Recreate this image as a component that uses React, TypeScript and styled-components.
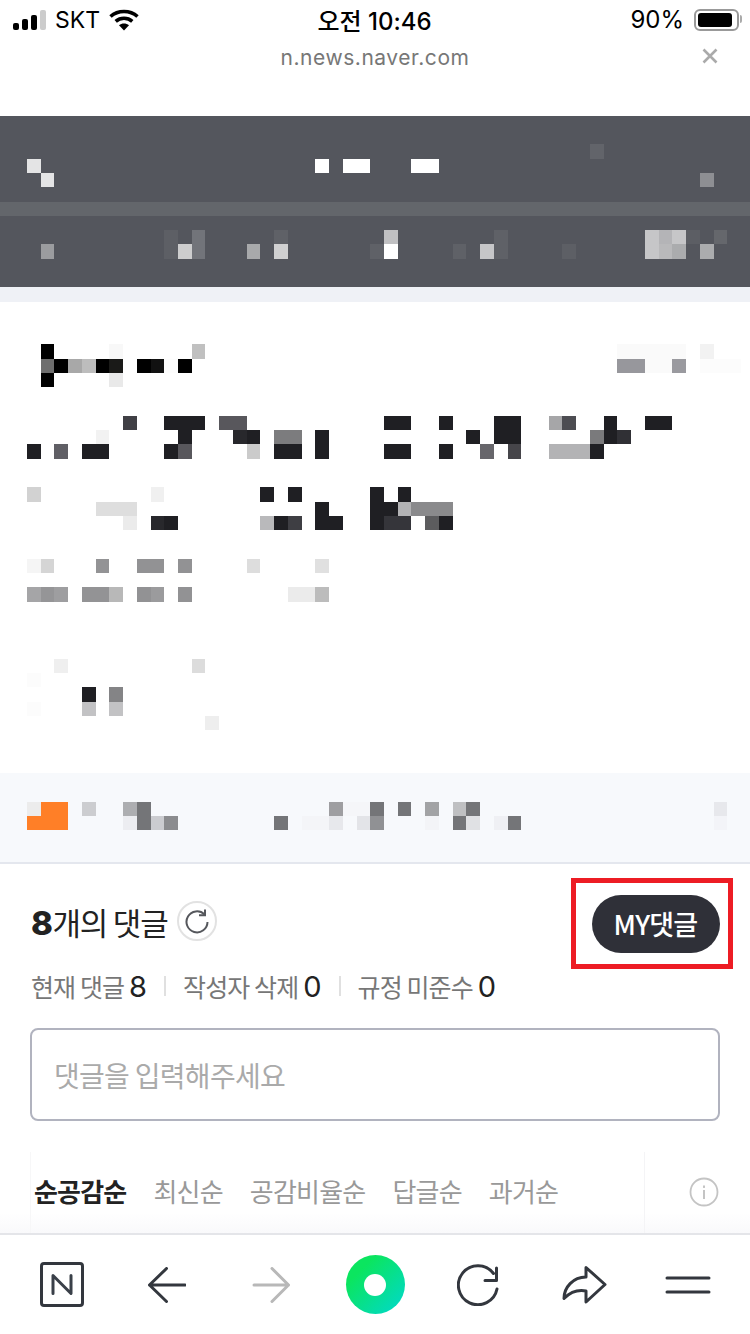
import { FC } from 'react';
import styled, { createGlobalStyle } from 'styled-components';

type Cell = [y: number, h: number, col: number, span: number, color: string];

const INK = '#1f1f23';
const ICON = '#33373e';
const SANS = `"Noto Sans CJK KR", "Liberation Sans", sans-serif`;
const UI = `Inter, "Noto Sans CJK KR", sans-serif`;

const colX = (n: number) => Math.round(27 + 13.73 * n);

// blurred content of the news page, cell by cell
const bannerCells: Cell[] = [
  [28, 15, 41, 1, '#62646a'],
  [43, 14, 0, 1, '#e4e4e5'],
  [43, 14, 21, 1, '#fff'],
  [43, 14, 23, 2, '#fff'],
  [43, 14, 28, 2, '#fff'],
  [57, 14, 1, 1, '#e4e4e5'],
  [57, 14, 49, 1, '#8e8f93'],
  [114, 14, 10, 1, '#5d5f65'],
  [114, 14, 12, 1, '#72747a'],
  [114, 14, 18, 1, '#5f6167'],
  [114, 14, 26, 1, '#c0c0c2'],
  [114, 14, 34, 1, '#5f6167'],
  [114, 14, 45, 1, '#c6c6c8'],
  [114, 14, 46, 1, '#b4b4b7'],
  [114, 14, 47, 1, '#c6c6c8'],
  [114, 14, 48, 1, '#5c5e64'],
  [114, 14, 50, 1, '#65676c'],
  [128, 15, 1, 1, '#9b9c9f'],
  [128, 15, 10, 1, '#5d5f65'],
  [128, 15, 11, 1, '#cdcdce'],
  [128, 15, 12, 1, '#72747a'],
  [128, 15, 16, 1, '#a8a9ab'],
  [128, 15, 18, 1, '#d0d0d1'],
  [128, 15, 25, 1, '#5f6167'],
  [128, 15, 26, 1, '#fff'],
  [128, 15, 31, 1, '#5f6167'],
  [128, 15, 33, 1, '#c6c6c8'],
  [128, 15, 34, 1, '#5f6167'],
  [128, 15, 39, 1, '#5d5f65'],
  [128, 15, 45, 1, '#c6c6c8'],
  [128, 15, 46, 1, '#b9b9bb'],
  [128, 15, 47, 1, '#abacae'],
  [128, 15, 49, 1, '#abacae'],
];

const articleCells: Cell[] = [
  [42, 15, 1, 1, '#000'],
  [42, 15, 6, 1, '#f8f8f8'],
  [42, 15, 12, 1, '#c0c0c0'],
  [42, 15, 43, 5, '#fafafa'],
  [42, 15, 49, 1, '#f2f2f2'],
  [57, 14, 1, 1, '#6e6e6e'],
  [57, 14, 2, 1, '#000'],
  [57, 14, 3, 1, '#a8a8a8'],
  [57, 14, 4, 1, '#bdbdbd'],
  [57, 14, 5, 1, '#000'],
  [57, 14, 6, 1, '#1a1a18'],
  [57, 14, 8, 1, '#000'],
  [57, 14, 9, 1, '#111'],
  [57, 14, 10, 1, '#fcfcfc'],
  [57, 14, 11, 1, '#000'],
  [57, 14, 43, 2, '#97979c'],
  [57, 14, 45, 2, '#fafafa'],
  [57, 14, 47, 1, '#9a9a9f'],
  [57, 14, 49, 3, '#fcfcfc'],
  [71, 14, 1, 1, '#000'],
  [71, 14, 6, 1, '#e9e9e9'],

  [114, 14, 7, 1, '#403f45'],
  [114, 14, 10, 3, INK],
  [114, 14, 14, 2, '#58575c'],
  [114, 14, 26, 2, INK],
  [114, 14, 30, 1, INK],
  [114, 14, 34, 2, INK],
  [114, 14, 38, 1, '#a6a6a8'],
  [114, 14, 39, 1, '#4d4d52'],
  [114, 14, 42, 1, INK],
  [114, 14, 45, 2, INK],
  [128, 14, 5, 1, '#f2f2f2'],
  [128, 14, 11, 1, INK],
  [128, 14, 15, 1, '#28282c'],
  [128, 14, 16, 1, INK],
  [128, 14, 18, 2, '#7c7c7e'],
  [128, 14, 21, 1, INK],
  [128, 14, 32, 1, INK],
  [128, 14, 34, 2, INK],
  [128, 14, 41, 1, '#7a7a7c'],
  [128, 14, 42, 1, INK],
  [128, 14, 43, 1, '#303035'],
  [142, 15, 0, 1, INK],
  [142, 15, 2, 1, '#605f65'],
  [142, 15, 4, 2, INK],
  [142, 15, 10, 1, INK],
  [142, 15, 11, 1, '#58575c'],
  [142, 15, 16, 1, '#cbcbcb'],
  [142, 15, 18, 2, INK],
  [142, 15, 21, 1, INK],
  [142, 15, 26, 2, INK],
  [142, 15, 30, 1, INK],
  [142, 15, 33, 1, '#67666b'],
  [142, 15, 35, 1, '#46454a'],
  [142, 15, 38, 3, '#b3b3b5'],
  [142, 15, 41, 1, INK],

  [185, 15, 0, 1, '#d2d2d2'],
  [185, 15, 9, 1, '#f0f0f0'],
  [185, 15, 17, 1, INK],
  [185, 15, 19, 1, INK],
  [185, 15, 25, 1, INK],
  [185, 15, 27, 1, INK],
  [200, 14, 5, 3, '#dedede'],
  [200, 14, 21, 1, INK],
  [200, 14, 25, 2, INK],
  [200, 14, 27, 1, '#b3b3b5'],
  [200, 14, 28, 3, '#8a8a8c'],
  [214, 14, 7, 1, '#ebebeb'],
  [214, 14, 9, 1, '#28282c'],
  [214, 14, 10, 1, INK],
  [214, 14, 17, 1, '#b9b9bb'],
  [214, 14, 18, 1, INK],
  [214, 14, 19, 1, '#3e3e43'],
  [214, 14, 21, 2, INK],
  [214, 14, 25, 1, INK],
  [214, 14, 26, 2, '#35353a'],
  [214, 14, 29, 1, '#5c5c5e'],
  [214, 14, 30, 1, INK],

  [257, 14, 0, 1, '#f5f5f5'],
  [257, 14, 1, 1, '#d5d5d5'],
  [257, 14, 5, 1, '#939395'],
  [257, 14, 8, 2, '#929294'],
  [257, 14, 11, 1, '#929294'],
  [257, 14, 16, 1, '#ddd'],
  [257, 14, 21, 1, '#e0e0e0'],
  [285, 15, 0, 1, '#a5a5a7'],
  [285, 15, 1, 1, '#959597'],
  [285, 15, 2, 1, '#9e9ea0'],
  [285, 15, 4, 2, '#939395'],
  [285, 15, 6, 1, '#b8b8b8'],
  [285, 15, 8, 1, '#929294'],
  [285, 15, 9, 1, '#9b9b9d'],
  [285, 15, 11, 1, '#929294'],
  [285, 15, 19, 2, '#ebebeb'],
  [285, 15, 21, 1, '#bcbcbc'],

  [357, 14, 2, 1, '#efefef'],
  [357, 14, 12, 1, '#dcdcdc'],
  [371, 14, 0, 1, '#fcfcfc'],
  [385, 15, 4, 1, INK],
  [385, 15, 6, 1, '#848486'],
  [400, 14, 0, 1, '#fcfcfc'],
  [400, 14, 4, 1, '#c2c2c4'],
  [400, 14, 6, 1, '#c2c2c4'],
  [414, 14, 13, 1, '#eee'],
];

const noticeCells: Cell[] = [
  [29, 14, 0, 1, '#ececec'],
  [29, 14, 1, 2, '#ff7f27'],
  [29, 14, 4, 1, '#cccdd0'],
  [29, 14, 7, 1, '#adaeb1'],
  [29, 14, 8, 1, '#747578'],
  [29, 14, 22, 1, '#9e9ea1'],
  [29, 14, 23, 2, '#f5f6f9'],
  [29, 14, 25, 1, '#747578'],
  [29, 14, 27, 1, '#747578'],
  [29, 14, 29, 1, '#a2a3a5'],
  [29, 14, 31, 1, '#bfc0c2'],
  [29, 14, 32, 1, '#747578'],
  [29, 14, 50, 1, '#e7e8ec'],
  [43, 14, 0, 3, '#ff7f27'],
  [43, 14, 7, 1, '#ecedf1'],
  [43, 14, 8, 1, '#747578'],
  [43, 14, 9, 1, '#cbccd0'],
  [43, 14, 10, 1, '#8b8c8f'],
  [43, 14, 18, 1, '#747578'],
  [43, 14, 20, 2, '#f4f5f8'],
  [43, 14, 22, 1, '#e7e8ec'],
  [43, 14, 24, 1, '#e3e4e8'],
  [43, 14, 25, 1, '#909194'],
  [43, 14, 29, 1, '#f3f4f7'],
  [43, 14, 31, 1, '#747578'],
  [43, 14, 32, 1, '#e0e1e4'],
  [43, 14, 34, 1, '#eff0f4'],
  [43, 14, 35, 1, '#747578'],
  [43, 14, 50, 1, '#f3f4f8'],
];

const Mosaic: FC<{ cells: Cell[]; height: number }> = ({ cells, height }) => (
  <MosaicSvg width={750} height={height} viewBox={`0 0 750 ${height}`}>
    {cells.map(([y, h, col, span, color], i) => (
      <rect
        key={i}
        x={colX(col)}
        y={y}
        width={colX(col + span) - colX(col)}
        height={h}
        fill={color}
      />
    ))}
  </MosaicSvg>
);

const tabs = ['최신순', '공감비율순', '답글순', '과거순'];

export default function App() {
  return (
    <Page>
      <GlobalStyle />
      <Chrome>
        <StatusBar>
          <StatusLeft>
            <svg width="33" height="20" viewBox="0 0 33 20">
              <rect x="0" y="13" width="6" height="7" rx="2" fill="#000" />
              <rect x="9" y="9" width="6" height="11" rx="2" fill="#000" />
              <rect x="18" y="5" width="6" height="15" rx="2" fill="#000" />
              <rect x="27" y="0" width="6" height="20" rx="2" fill="#ccc" />
            </svg>
            <Carrier>SKT</Carrier>
            <svg width="30" height="22" viewBox="0 0 30 22">
              <path d="M1.500 7.500C9 .8 21 .8 28.500 7.500" fill="none" stroke="#000" strokeWidth="3.600" />
              <path d="M6.700 12.300c4.700-4 11.900-4 16.600 0" fill="none" stroke="#000" strokeWidth="3.600" />
              <path d="M15 21.500l-5-5.200c2.800-2.300 7.200-2.300 10 0z" fill="#000" />
            </svg>
          </StatusLeft>
          <Clock>오전 10:46</Clock>
          <StatusRight>
            <Percent>90%</Percent>
            <Battery>
              <BatteryFill />
            </Battery>
          </StatusRight>
        </StatusBar>
        <UrlBar>
          <Url>n.news.naver.com</Url>
          <CloseIcon width="16" height="16" viewBox="0 0 16 16">
            <path d="M1.500 1.500l13 13M14.500 1.500l-13 13" stroke="#aaa" strokeWidth="2.600" />
          </CloseIcon>
        </UrlBar>
      </Chrome>

      <Banner>
        <BannerRule />
        <Mosaic cells={bannerCells} height={171} />
      </Banner>
      <Gap />
      <Article>
        <Mosaic cells={articleCells} height={471} />
      </Article>
      <Notice>
        <Mosaic cells={noticeCells} height={89} />
      </Notice>

      <Comments>
        <CommentHead>
          <TitleRow>
            <Title>
              <strong>8</strong>개의 댓글
            </Title>
            <RefreshBadge>
              <svg width="26" height="26" viewBox="0 0 26 26">
                <path
                  d="M20.500 6.500A10.500 10.500 0 1 0 23.500 14"
                  fill="none"
                  stroke="#55575c"
                  strokeWidth="2"
                />
                <path d="M21 1.500v5.800h-6" fill="none" stroke="#55575c" strokeWidth="2" />
              </svg>
            </RefreshBadge>
          </TitleRow>
          <Highlight>
            <MyButton>MY댓글</MyButton>
          </Highlight>
        </CommentHead>

        <Stats>
          <Stat>
            현재 댓글<b>8</b>
          </Stat>
          <StatDivider />
          <Stat>
            작성자 삭제<b>0</b>
          </Stat>
          <StatDivider />
          <Stat>
            규정 미준수<b>0</b>
          </Stat>
        </Stats>

        <InputBox>댓글을 입력해주세요</InputBox>

        <TabRow>
          <Tab $active>순공감순</Tab>
          {tabs.map((t) => (
            <Tab key={t}>{t}</Tab>
          ))}
          <InfoIcon width="30" height="30" viewBox="0 0 30 30">
            <circle cx="15" cy="15" r="13.500" fill="none" stroke="#c4c4c4" strokeWidth="1.800" />
            <rect x="14" y="13" width="2" height="9" fill="#c4c4c4" />
            <rect x="14" y="8.500" width="2" height="2.400" fill="#c4c4c4" />
          </InfoIcon>
        </TabRow>
      </Comments>

      <Toolbar>
        <HomeIcon width="44" height="45" viewBox="0 0 44 45">
          <rect x="1.500" y="1.500" width="41" height="42" rx="2.500" fill="none" stroke={ICON} strokeWidth="3" />
          <path
            d="M13 31.500V13.500L31 31.500V13.500"
            fill="none"
            stroke="#3a4049"
            strokeWidth="3"
            strokeLinecap="round"
            strokeLinejoin="round"
          />
        </HomeIcon>
        <svg width="38" height="36" viewBox="0 0 38 36">
          <path
            d="M18.500 1.500L1.500 18L18.500 34.500M1.500 18H37"
            fill="none"
            stroke={ICON}
            strokeWidth="3"
            strokeLinecap="round"
            strokeLinejoin="round"
          />
        </svg>
        <svg width="38" height="36" viewBox="0 0 38 36">
          <path
            d="M20 1.500L36.500 18L20 34.500M36.500 18H2"
            fill="none"
            stroke="#b8b8b8"
            strokeWidth="3"
            strokeLinecap="round"
            strokeLinejoin="round"
          />
        </svg>
        <GreenDot>
          <GreenHole />
        </GreenDot>
        <ReloadIcon width="42" height="42" viewBox="0 0 42 42">
          <path
            d="M36.500 9.500A19.500 19.500 0 1 0 40 25"
            fill="none"
            stroke={ICON}
            strokeWidth="3"
            strokeLinecap="round"
          />
          <path
            d="M39.500 4V16.500H28"
            fill="none"
            stroke={ICON}
            strokeWidth="3"
            strokeLinecap="round"
            strokeLinejoin="round"
          />
        </ReloadIcon>
        <svg width="46" height="40" viewBox="0 0 46 40">
          <path
            d="M25 2.500L44 19.500L25 37V26C17 24.500 9 27.500 3 33.500C3 22.500 12 12 25 12Z"
            fill="none"
            stroke={ICON}
            strokeWidth="3"
            strokeLinejoin="round"
          />
        </svg>
        <svg width="46" height="18" viewBox="0 0 46 18">
          <path d="M2 2h42M2 16h42" stroke={ICON} strokeWidth="3" strokeLinecap="round" />
        </svg>
      </Toolbar>
    </Page>
  );
}

const GlobalStyle = createGlobalStyle`
  html, body {
    margin: 0;
    padding: 0;
    background: #fff;
  }
`;

const Page = styled.div`
  width: 750px;
  height: 1334px;
  display: flex;
  flex-direction: column;
  overflow: hidden;
  background: #fff;
  font-family: ${SANS};
`;

const MosaicSvg = styled.svg`
  position: relative;
  display: block;
  shape-rendering: crispEdges;
`;

const Chrome = styled.div`
  height: 116px;
  flex: none;
`;

const StatusBar = styled.div`
  box-sizing: border-box;
  height: 40px;
  padding: 0 11px 1px 13px;
  display: grid;
  grid-template-columns: 1fr auto 1fr;
  align-items: center;
  font-family: ${UI};
  color: #000;
`;

const StatusLeft = styled.div`
  display: flex;
  align-items: center;
  gap: 9px;
`;

const Carrier = styled.span`
  font-size: 23px;
`;

const Clock = styled.span`
  font-size: 24px;
  font-weight: 500;
  margin-left: -3px;
`;

const StatusRight = styled.div`
  display: flex;
  align-items: center;
  justify-content: flex-end;
  gap: 10px;
`;

const Percent = styled.span`
  font-size: 24px;
`;

const Battery = styled.div`
  position: relative;
  box-sizing: border-box;
  width: 45px;
  height: 22px;
  padding: 2px;
  border: 2px solid #999;
  border-radius: 6px;
  &::after {
    content: '';
    position: absolute;
    top: 4px;
    right: -5px;
    width: 2px;
    height: 8px;
    background: #aaa;
    border-radius: 0 2px 2px 0;
  }
`;

const BatteryFill = styled.div`
  width: 92%;
  height: 100%;
  background: #000;
  border-radius: 3px;
`;

const UrlBar = styled.div`
  position: relative;
  height: 34px;
  display: flex;
  align-items: center;
  justify-content: center;
`;

const Url = styled.span`
  font-family: ${UI};
  font-size: 21px;
  letter-spacing: 0.55px;
  color: #777;
`;

const CloseIcon = styled.svg`
  position: absolute;
  right: 32px;
  top: 8px;
`;

const Banner = styled.div`
  position: relative;
  flex: none;
  height: 171px;
  background: #54565d;
`;

const BannerRule = styled.div`
  position: absolute;
  left: 0;
  right: 0;
  top: 86px;
  height: 14px;
  background: #63666b;
`;

const Gap = styled.div`
  flex: none;
  height: 15px;
  background: #eff1f6;
`;

const Article = styled.div`
  flex: none;
  height: 471px;
`;

const Notice = styled.div`
  flex: none;
  height: 89px;
  background: #f7f9fc;
  border-bottom: 2px solid #e4e7ee;
`;

const Comments = styled.div`
  flex: 1;
  min-height: 0;
  padding-top: 14px;
  display: flex;
  flex-direction: column;
  background: linear-gradient(#fff calc(100% - 20px), #f9f9fb);
`;

const CommentHead = styled.div`
  display: flex;
  align-items: center;
  justify-content: space-between;
  padding: 0 17px 0 31px;
`;

const TitleRow = styled.div`
  display: flex;
  align-items: center;
  gap: 10px;
  padding-bottom: 5px;
`;

const Title = styled.h2`
  margin: 0;
  font-size: 31px;
  font-weight: 400;
  letter-spacing: -1.200px;
  color: #222;
  strong {
    font-family: ${UI};
    font-size: 33px;
    font-weight: 800;
    letter-spacing: -0.500px;
  }
`;

const RefreshBadge = styled.div`
  box-sizing: border-box;
  width: 40px;
  height: 40px;
  border: 2px solid #e2e2e2;
  border-radius: 50%;
  display: flex;
  align-items: center;
  justify-content: center;
`;

const Highlight = styled.div`
  box-sizing: border-box;
  width: 162px;
  height: 91px;
  border: 5px solid #ed1c24;
  display: flex;
  align-items: center;
  justify-content: center;
  padding-left: 7px;
`;

const MyButton = styled.div`
  width: 128px;
  height: 58px;
  border-radius: 29px;
  background: #2f3038;
  color: #fff;
  font-size: 27px;
  font-weight: 500;
  letter-spacing: -0.800px;
  display: flex;
  align-items: center;
  justify-content: center;
`;

const Stats = styled.div`
  padding-left: 31px;
  height: 34px;
  display: flex;
  align-items: center;
  gap: 17px;
`;

const Stat = styled.span`
  display: inline-flex;
  align-items: center;
  font-size: 25px;
  letter-spacing: -0.900px;
  color: #777;
  b {
    margin-left: 5px;
    font-family: ${UI};
    font-size: 29px;
    font-weight: 400;
    letter-spacing: 0;
    color: #222;
  }
`;

const StatDivider = styled.i`
  width: 2px;
  height: 20px;
  background: #e0e0e0;
`;

const InputBox = styled.div`
  box-sizing: border-box;
  margin: 25px 30px 0;
  height: 93px;
  padding-left: 22px;
  border: 2px solid #b1b3bf;
  border-radius: 8px;
  display: flex;
  align-items: center;
  font-size: 28px;
  letter-spacing: -0.700px;
  color: #aaa;
`;

const TabRow = styled.div`
  position: relative;
  margin: 31px 105px 0 30px;
  padding: 0 0 4px 3px;
  flex: 1;
  display: flex;
  align-items: center;
  gap: 27px;
  border-left: 1px solid #f7f7f8;
  border-right: 1px solid #f4f4f6;
`;

const Tab = styled.span<{ $active?: boolean }>`
  font-size: 26px;
  letter-spacing: -0.8px;
  font-weight: ${(p) => (p.$active ? 700 : 400)};
  color: ${(p) => (p.$active ? '#222' : '#999')};
`;

const InfoIcon = styled.svg`
  position: absolute;
  right: -75px;
  top: 25px;
`;

const Toolbar = styled.div`
  box-sizing: border-box;
  flex: none;
  height: 101px;
  padding: 0 10px 0 11px;
  border-top: 2px solid #e4e5e9;
  background: #fff;
  display: grid;
  grid-template-columns: repeat(7, 1fr);
  align-items: center;
  justify-items: center;
`;

const HomeIcon = styled.svg`
  margin-right: 2px;
`;

const ReloadIcon = styled.svg`
  margin-right: 4px;
`;

const GreenDot = styled.div`
  width: 59px;
  height: 59px;
  border-radius: 50%;
  background: linear-gradient(135deg, #0be55f 25%, #00d8d0 100%);
  display: flex;
  align-items: center;
  justify-content: center;
`;

const GreenHole = styled.div`
  width: 22px;
  height: 22px;
  border-radius: 50%;
  background: #fff;
`;
